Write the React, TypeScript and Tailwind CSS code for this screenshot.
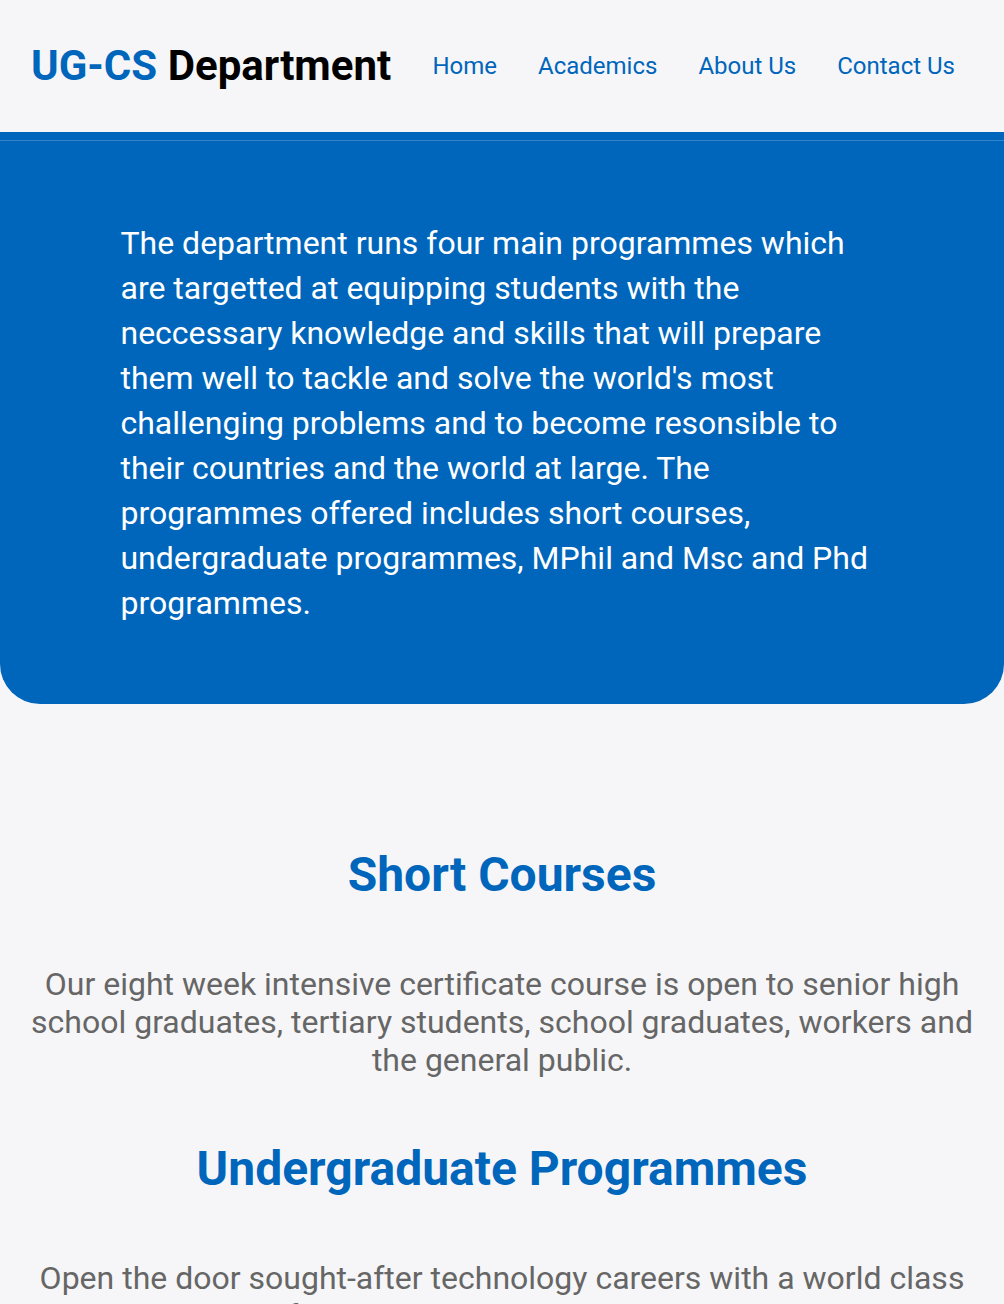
import React from "react";

export default function App() {
  return (
    <div className="min-h-screen bg-[#f6f6f8] font-['Roboto',sans-serif]">
      <header className="flex h-[140px] items-center justify-between border-b-8 border-[#0066bb] pl-[31px] pr-[49px]">
        <h1 className="text-[42px] font-bold leading-none">
          <span className="text-[#0066bb]">UG-CS</span>{" "}
          <span className="text-black">Department</span>
        </h1>
        <nav className="flex gap-[41px] text-[24px] text-[#0066bb]">
          <a href="#">Home</a>
          <a href="#">Academics</a>
          <a href="#">About Us</a>
          <a href="#">Contact Us</a>
        </nav>
      </header>
      <section className="rounded-b-[40px] border-t border-white/20 bg-[#0066bb] px-[12%] pt-20 pb-[78px]">
        <p className="text-[32px] leading-[45px] text-white">
          The department runs four main programmes which are targetted at equipping students with the
          neccessary knowledge and skills that will prepare them well to tackle and solve the world's most
          challenging problems and to become resonsible to their countries and the world at large. The
          programmes offered includes short courses, undergraduate programmes, MPhil and Msc and Phd
          programmes.
        </p>
      </section>
      <main className="px-6 pt-[81px] text-center">
        <h2 className="mt-[63px] mb-16 text-[48px] font-bold leading-[53px] text-[#0066bb]">Short Courses</h2>
        <p className="text-[32px] leading-[38px] text-[#666666]">
          Our eight week intensive certificate course is open to senior high school graduates, tertiary
          students, school graduates, workers and the general public.
        </p>
        <h2 className="mt-[63px] mb-16 text-[48px] font-bold leading-[53px] text-[#0066bb]">Undergraduate Programmes</h2>
        <p className="text-[32px] leading-[38px] text-[#666666]">
          Open the door sought-after technology careers with a world class Bachelor of science in Computer
          Science and more.
        </p>
      </main>
    </div>
  );
}
